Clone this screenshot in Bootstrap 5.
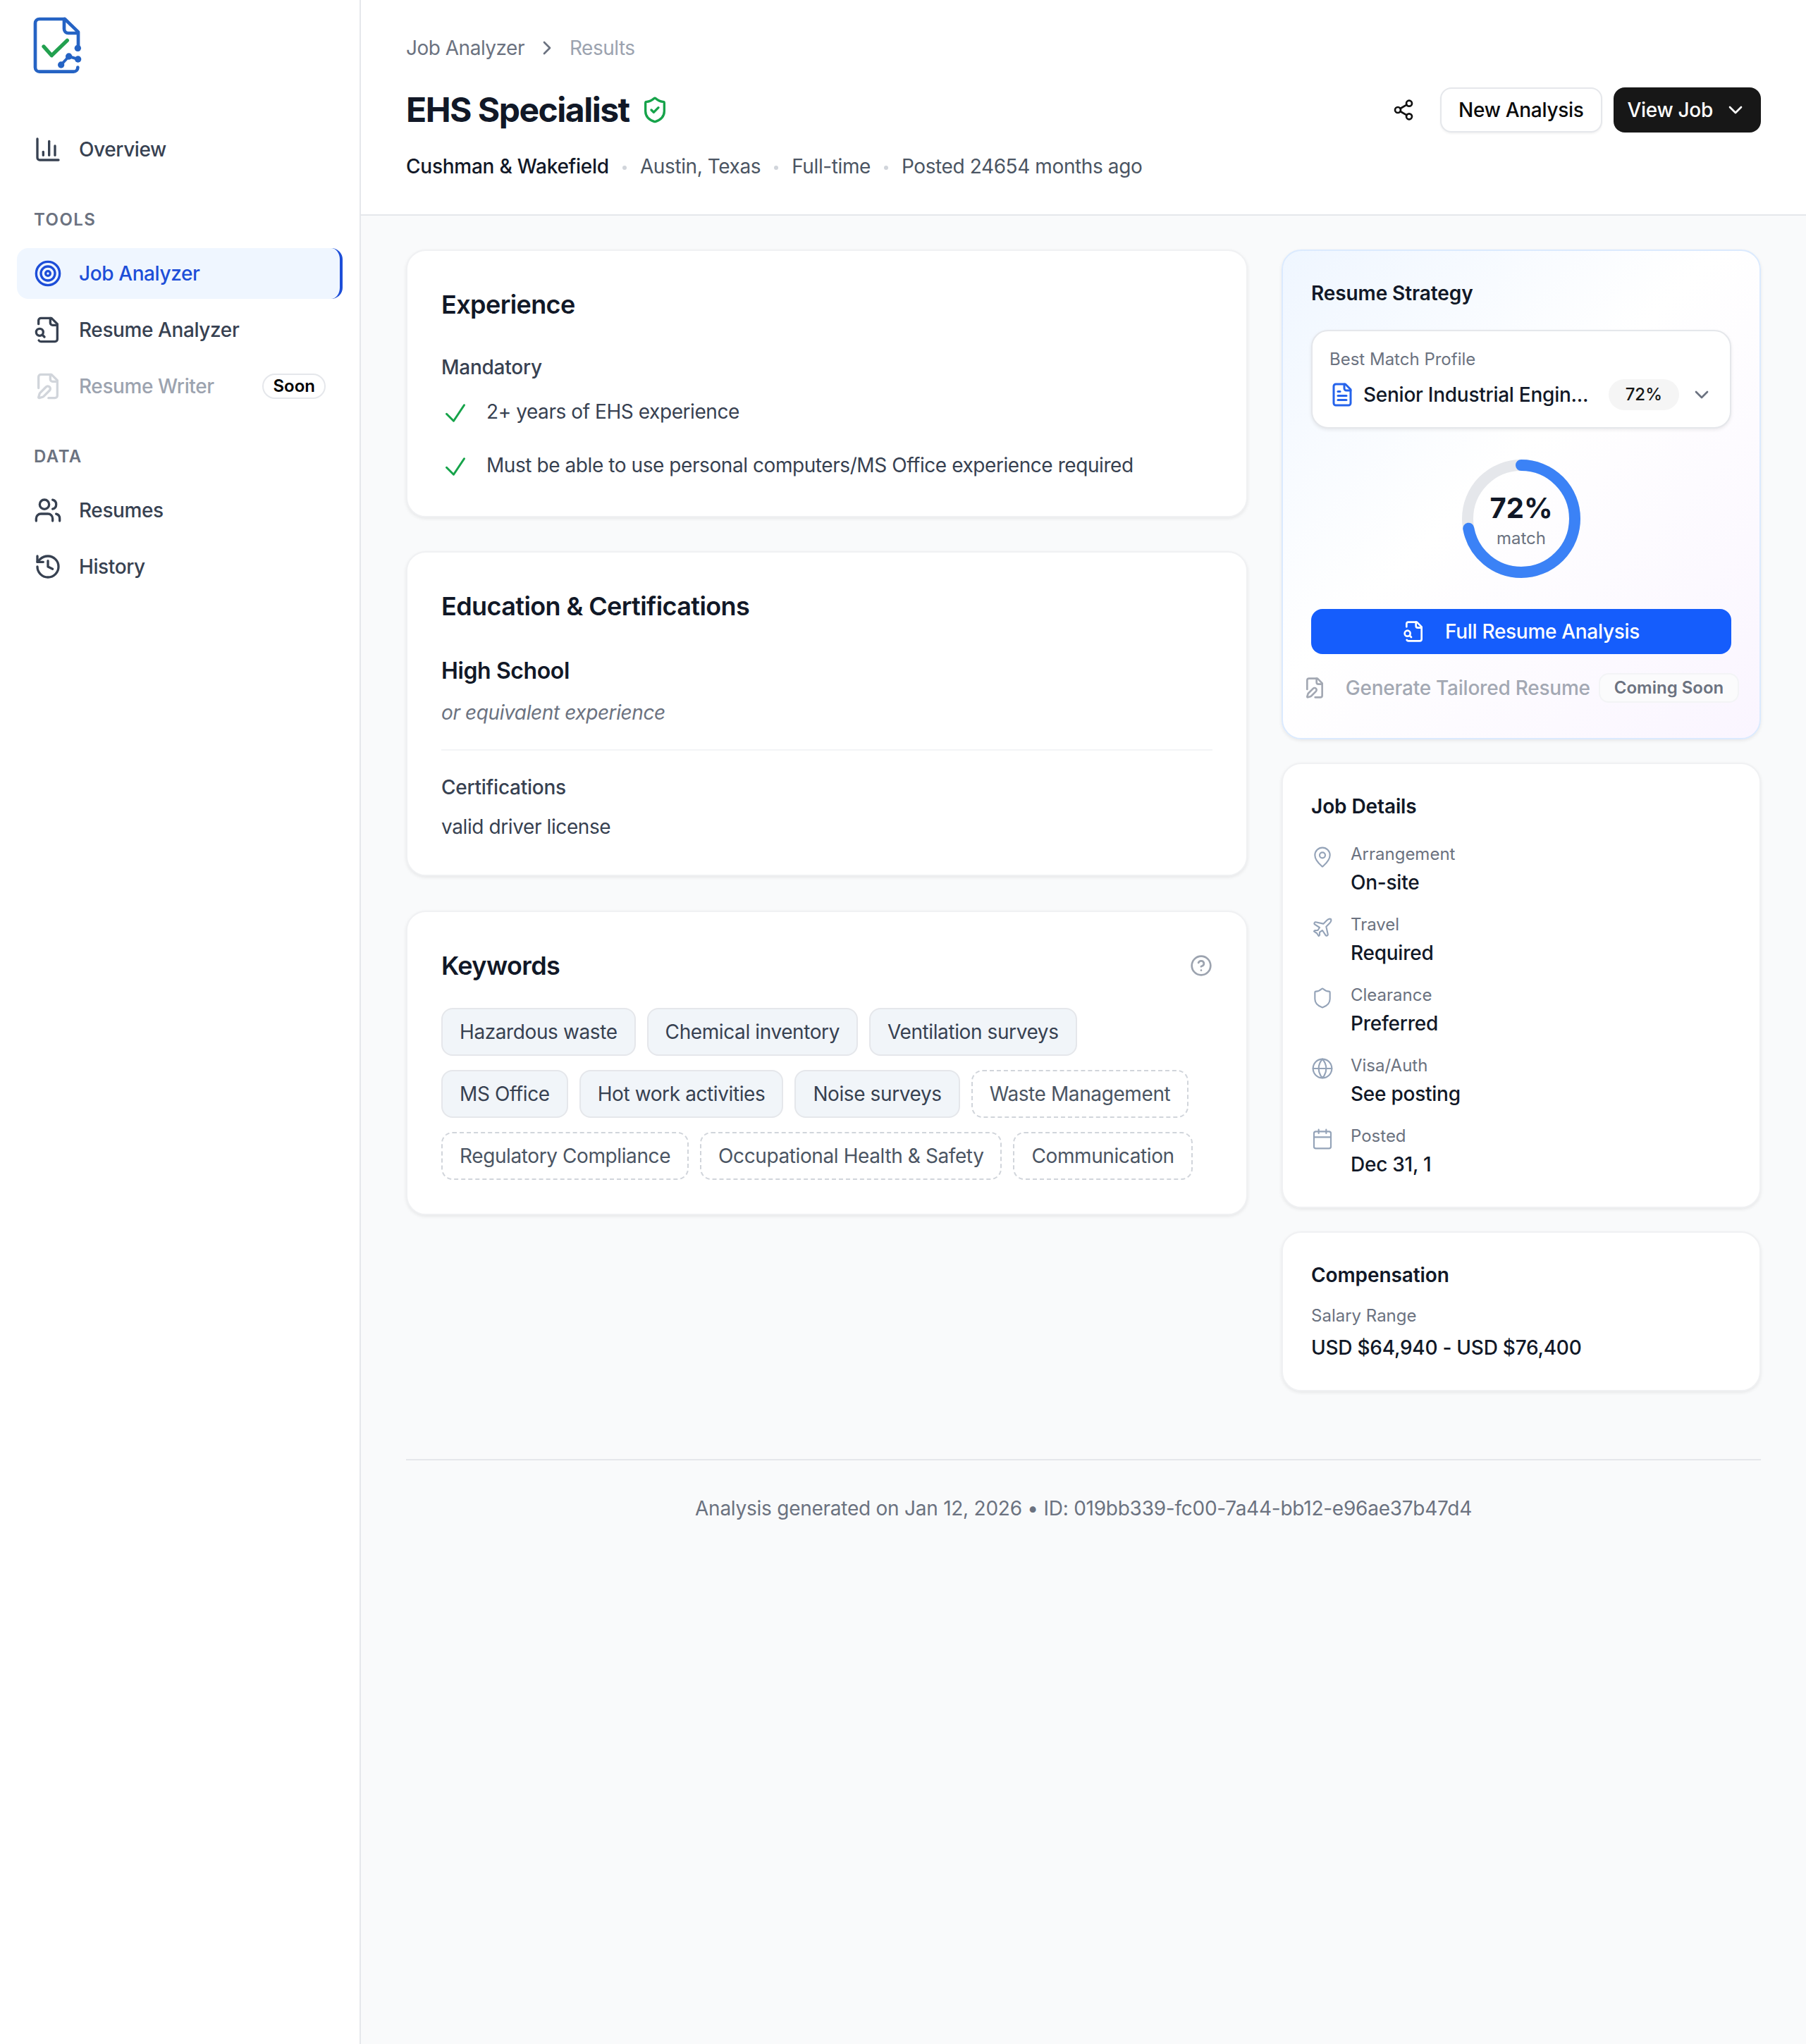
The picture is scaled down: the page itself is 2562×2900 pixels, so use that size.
<!DOCTYPE html>
<html lang="en">
<head>
    <meta charset="UTF-8">
    <meta name="viewport" content="width=device-width, initial-scale=1.0">
    <title>EHS Specialist - Job Analyzer</title>
    <link href="https://cdn.jsdelivr.net/npm/bootstrap@5.3.0/dist/css/bootstrap.min.css" rel="stylesheet">
    <style>
        html { font-size: 32px; }
        body { font-family: Inter, "Liberation Sans", sans-serif; font-size: 28px; line-height: 40px; letter-spacing: -.4px; color: #111827; background: #f9fafb; }
        svg.ico { fill: none; stroke: currentColor; stroke-width: 2; stroke-linecap: round; stroke-linejoin: round; flex-shrink: 0; display: block; }
        .ico-40 { width: 40px; height: 40px; }
        .ico-32 { width: 32px; height: 32px; }

        .side-bar { width: 512px; flex-shrink: 0; background: #fff; border-right: 2px solid #e5e7eb; padding: 24px 24px; }
        .side-logo { display: block; width: 70px; height: 80px; margin: 0 0 72px 22px; }
        .side-label { font-size: 24px; line-height: 32px; font-weight: 600; letter-spacing: .06em; text-transform: uppercase; color: #6b7280; margin: 48px 0 24px 24px; }
        .side-link { display: flex; align-items: center; gap: 24px; height: 72px; padding: 0 24px; border-radius: 16px; font-weight: 500; color: #374151; text-decoration: none; margin-bottom: 8px; }
        .side-link.is-active { background: #eff6ff; color: #1d4ed8; border-right: 4px solid #1d4ed8; }
        .side-link.is-off { color: #9ca3af; }
        .side-link.is-off svg { color: #d1d5db; }
        .soon-tag { margin-left: auto; font-size: 24px; line-height: 32px; font-weight: 600; letter-spacing: 0; color: #000; border: 2px solid #e5e7eb; border-radius: 999px; padding: 0 13px; margin-right: 0; }

        .top-head { background: #fff; border-bottom: 2px solid #e5e7eb; padding: 48px 64px 48px; }
        .crumb-a { color: #6b7280; letter-spacing: -.5px; }
        .crumb-b { color: #9ca3af; letter-spacing: -.5px; }
        .crumb-sep { color: #6b7280; }
        .head-row { height: 64px; margin-top: 36px; }
        .head-title { font-size: 48px; line-height: 64px; font-weight: 700; letter-spacing: -1.5px; margin: 0; color: #111827; }
        .shield-ok { color: #16a34a; }
        .head-meta { margin-top: 28px; color: #4b5563; }
        .head-meta b { font-weight: 500; color: #111827; letter-spacing: -.25px; }
        .meta-dot { width: 6px; height: 6px; border-radius: 50%; background: #d1d5db; margin: 4px 19px 0; }
        .btn-share { width: 72px; height: 64px; padding: 0; display: flex; align-items: center; justify-content: center; border: 0; background: none; color: #111; }
        .btn-new, .btn-view { height: 64px; font-size: 28px; line-height: 40px; font-weight: 500; letter-spacing: -.3px; border-radius: 16px; display: flex; align-items: center; }
        .btn-new { padding: 0 24px; background: #fff; border: 2px solid #e5e7eb; color: #0a0a0a; box-shadow: 0 2px 3px rgba(0,0,0,.05); }
        .btn-view { padding: 0 20px; gap: 16px; background: #171717; border: 0; color: #fff; }

        .main-wrap { padding: 48px 64px 0; }
        .col-right { width: 680px; flex-shrink: 0; }
        .panel-box { background: #fff; border: 2px solid #f0f1f3; border-radius: 28px; box-shadow: 0 2px 5px rgba(0,0,0,.08); }
        .panel-big { padding: 48px; }
        .panel-side { padding: 40px; }
        .big-title { font-size: 36px; line-height: 56px; font-weight: 600; letter-spacing: -.6px; margin: 0; color: #111827; }
        .side-title { font-size: 28px; line-height: 40px; font-weight: 600; letter-spacing: -.1px; margin: 0; color: #111827; }
        .txt-body { color: #374151; }
        .txt-head { color: #374151; font-weight: 500; letter-spacing: -.25px; }
        .txt-gray { color: #6b7280; }
        .txt-small { font-size: 24px; line-height: 32px; letter-spacing: 0; color: #6b7280; }
        .txt-val { font-weight: 500; letter-spacing: -.25px; color: #111827; margin-top: 4px; }
        .need-head { margin-top: 41px; }
        .need-list { list-style: none; margin: 20px 0 0; padding: 0 0 1px; display: flex; flex-direction: column; gap: 30px; }
        .need-list li { display: flex; gap: 24px; line-height: 46px; letter-spacing: -.43px; color: #374151; }
        .need-list svg { color: #16a34a; stroke-width: 1.8; margin-top: 5px; }
        .edu-name { font-size: 32px; line-height: 48px; font-weight: 600; color: #111827; margin-top: 40px; }
        .rule-line { border-top: 2px solid #f3f4f6; margin: 32px 0; }
        .edu-box { margin-top: 48px; }
        .kw-box { margin-top: 49px; }
        .edu-note { margin-top: 15px; }
        .edu-lic { margin-top: 16px; }
        .kw-list { margin-top: 32px; }
        .kw-help { color: #9ca3af; }
        .chip-row { display: flex; gap: 16px; margin-bottom: 20px; }
        .chip-row:last-child { margin-bottom: 0; }
        .kw-chip { height: 68px; display: flex; align-items: center; padding: 0 24px; border-radius: 16px; border: 2px solid #e5e7eb; background: #f1f5f9; color: #374151; white-space: nowrap; }
        .kw-chip.is-dash { background: #fff; border: 2px dashed #d1d5db; color: #4b5563; }

        .panel-strategy { background: linear-gradient(135deg, #eff6ff 0%, #ffffff 45%, #faf5ff 100%); border-color: #dbeafe; padding-bottom: 39px; }
        .pick-box { background: #fff; border: 2px solid #e5e7eb; border-radius: 24px; padding: 24px; margin-top: 32px; box-shadow: 0 2px 5px rgba(0,0,0,.08); }
        .pick-row { margin-top: 12px; gap: 12px; font-weight: 500; letter-spacing: -.26px; color: #111827; }
        .pick-doc { width: 36px; height: 36px; color: #2563eb; }
        .pick-arrow { color: #6b7280; margin-left: 4px; }
        .pick-pct { height: 44px; padding: 0 24px; border-radius: 22px; background: #f5f5f5; font-size: 24px; line-height: 44px; font-weight: 500; letter-spacing: 0; color: #171717; }
        .ring-box { width: 168px; height: 168px; margin: 44px auto; position: relative; }
        .ring-text { position: absolute; inset: 0; padding-top: 4px; display: flex; flex-direction: column; align-items: center; justify-content: center; }
        .ring-num { font-size: 40px; line-height: 48px; font-weight: 700; letter-spacing: 0; color: #111827; }
        .ring-sub { font-size: 24px; line-height: 32px; letter-spacing: 0; color: #6b7280; margin-top: 3px; }
        .btn-blue { height: 64px; width: 100%; display: flex; align-items: center; justify-content: center; gap: 28px; font-size: 28px; line-height: 40px; font-weight: 500; letter-spacing: -.3px; color: #fff; background: #155dfc; border: 0; border-radius: 16px; }
        .gen-row { height: 64px; margin-top: 16px; display: flex; align-items: center; justify-content: center; white-space: nowrap; color: #a3a8b3; font-weight: 500; letter-spacing: -.23px; }
        .gen-row svg { color: #a3a8b3; margin-right: 28px; }
        .gen-tag { margin-left: 12px; font-size: 24px; line-height: 38px; font-weight: 600; letter-spacing: 0; color: #6b7280; background: #fbfbfc; border: 2px solid #f3f4f6; border-radius: 14px; padding: 0 20px; }
        .side-gap { margin-top: 33px; }
        .info-list { display: flex; flex-direction: column; gap: 24px; margin-top: 32px; }
        .info-item { display: flex; gap: 24px; }
        .info-item svg { color: #94a3b8; stroke-width: 1.6; margin-top: 4px; }
        .comp-label { margin-top: 22px; }
        .comp-val { margin-top: 9px; }
        .foot-line { margin-top: 96px; border-top: 2px solid #e5e7eb; padding-top: 48px; text-align: center; letter-spacing: -.25px; color: #6b7280; }
    </style>
</head>
<body>
    <div class="d-flex min-vh-100">
        <aside class="side-bar">
            <svg class="side-logo" viewBox="80 70 210 240" fill="none" stroke-linecap="round" stroke-linejoin="round">
                <path d="M215 79H110a18 18 0 0 0-18 18V285a18 18 0 0 0 18 18H255a18 18 0 0 0 18-18" stroke="#2563c4" stroke-width="14"/>
                <path d="M215 79v42a18 18 0 0 0 18 18h42M218 79l57 55v66" stroke="#2563c4" stroke-width="14"/>
                <circle cx="273" cy="203" r="14" fill="#2563c4"/>
                <circle cx="202" cy="274" r="14" fill="#2563c4"/>
                <circle cx="235" cy="238" r="14" fill="#2563c4"/>
                <circle cx="274" cy="250" r="14" fill="#2563c4"/>
                <path d="M202 274l33-36 39 12" stroke="#2563c4" stroke-width="12"/>
                <path d="M128 196l34 38 66-64" stroke="#22a04f" stroke-width="16"/>
            </svg>
            <a class="side-link" href="#">
                <svg class="ico ico-40" viewBox="0 0 24 24"><path d="M3 3v16a2 2 0 0 0 2 2h16"/><path d="M18 17V9"/><path d="M13 17V5"/><path d="M8 17v-3"/></svg>
                Overview
            </a>
            <div class="side-label">Tools</div>
            <a class="side-link is-active" href="#">
                <svg class="ico ico-40" viewBox="0 0 24 24"><circle cx="12" cy="12" r="10"/><circle cx="12" cy="12" r="6"/><circle cx="12" cy="12" r="2"/></svg>
                Job Analyzer
            </a>
            <a class="side-link" href="#">
                <svg class="ico ico-40" viewBox="0 0 24 24"><path d="M14 2v4a2 2 0 0 0 2 2h4"/><path d="M4.268 21a2 2 0 0 0 1.727 1H18a2 2 0 0 0 2-2V7l-5-5H6a2 2 0 0 0-2 2v3"/><path d="m9 18-1.5-1.5"/><circle cx="5" cy="14" r="3"/></svg>
                Resume Analyzer
            </a>
            <a class="side-link is-off" href="#">
                <svg class="ico ico-40" viewBox="0 0 24 24"><path d="M12.5 22H18a2 2 0 0 0 2-2V7l-5-5H6a2 2 0 0 0-2 2v9.5"/><path d="M14 2v4a2 2 0 0 0 2 2h4"/><path d="M13.378 15.626a1 1 0 1 0-3.004-3.004l-5.01 5.012a2 2 0 0 0-.506.854l-.837 2.87a.5.5 0 0 0 .62.62l2.87-.837a2 2 0 0 0 .854-.506z"/></svg>
                Resume Writer
                <span class="soon-tag">Soon</span>
            </a>
            <div class="side-label">Data</div>
            <a class="side-link" href="#">
                <svg class="ico ico-40" viewBox="0 0 24 24"><path d="M16 21v-2a4 4 0 0 0-4-4H6a4 4 0 0 0-4 4v2"/><circle cx="9" cy="7" r="4"/><path d="M22 21v-2a4 4 0 0 0-3-3.87"/><path d="M16 3.13a4 4 0 0 1 0 7.75"/></svg>
                Resumes
            </a>
            <a class="side-link" href="#">
                <svg class="ico ico-40" viewBox="0 0 24 24"><path d="M3 12a9 9 0 1 0 9-9 9.75 9.75 0 0 0-6.74 2.74L3 8"/><path d="M3 3v5h5"/><path d="M12 7v5l4 2"/></svg>
                History
            </a>
        </aside>

        <div class="flex-grow-1">
            <header class="top-head">
                <div class="d-flex align-items-center gap-2">
                    <span class="crumb-a">Job Analyzer</span>
                    <svg class="ico ico-32 crumb-sep" viewBox="0 0 24 24"><path d="m9 18 6-6-6-6"/></svg>
                    <span class="crumb-b">Results</span>
                </div>
                <div class="head-row d-flex align-items-center">
                    <h1 class="head-title">EHS Specialist</h1>
                    <svg class="ico ico-40 ms-2 shield-ok" viewBox="0 0 24 24"><path d="M20 13c0 5-3.5 7.5-7.66 8.95a1 1 0 0 1-.67-.01C7.5 20.5 4 18 4 13V6a1 1 0 0 1 1-1c2 0 4.5-1.2 6.24-2.72a1.17 1.17 0 0 1 1.52 0C14.51 3.81 17 5 19 5a1 1 0 0 1 1 1z"/><path d="m9 12 2 2 4-4"/></svg>
                    <div class="ms-auto d-flex align-items-center gap-2">
                        <button type="button" class="btn-share">
                            <svg class="ico ico-32" viewBox="0 0 24 24"><circle cx="18" cy="5" r="3"/><circle cx="6" cy="12" r="3"/><circle cx="18" cy="19" r="3"/><path d="m8.59 13.51 6.83 3.98"/><path d="m15.41 6.51-6.82 3.98"/></svg>
                        </button>
                        <button type="button" class="btn btn-new">New Analysis</button>
                        <button type="button" class="btn btn-view">View Job
                            <svg class="ico ico-32" viewBox="0 0 24 24"><path d="m6 9 6 6 6-6"/></svg>
                        </button>
                    </div>
                </div>
                <div class="head-meta d-flex align-items-center">
                    <b>Cushman &amp; Wakefield</b><span class="meta-dot"></span>
                    <span>Austin, Texas</span><span class="meta-dot"></span>
                    <span>Full-time</span><span class="meta-dot"></span>
                    <span>Posted 24654 months ago</span>
                </div>
            </header>

            <main class="main-wrap">
                <div class="d-flex gap-4 align-items-start">
                    <div class="flex-grow-1">
                        <section class="panel-box panel-big">
                            <h2 class="big-title">Experience</h2>
                            <div class="txt-head need-head">Mandatory</div>
                            <ul class="need-list">
                                <li><svg class="ico ico-40" viewBox="0 0 24 24"><path d="m4.5 12.75 6 6 9-13.5"/></svg>2+ years of EHS experience</li>
                                <li><svg class="ico ico-40" viewBox="0 0 24 24"><path d="m4.5 12.75 6 6 9-13.5"/></svg>Must be able to use personal computers/MS Office experience required</li>
                            </ul>
                        </section>

                        <section class="panel-box panel-big edu-box">
                            <h2 class="big-title">Education &amp; Certifications</h2>
                            <div class="edu-name">High School</div>
                            <div class="txt-gray fst-italic edu-note">or equivalent experience</div>
                            <div class="rule-line"></div>
                            <div class="txt-head">Certifications</div>
                            <div class="txt-body edu-lic">valid driver license</div>
                        </section>

                        <section class="panel-box panel-big kw-box">
                            <div class="d-flex align-items-center justify-content-between">
                                <h2 class="big-title">Keywords</h2>
                                <svg class="ico ico-32 kw-help" viewBox="0 0 24 24"><circle cx="12" cy="12" r="10"/><path d="M9.09 9a3 3 0 0 1 5.83 1c0 2-3 3-3 3"/><path d="M12 17h.01"/></svg>
                            </div>
                            <div class="kw-list">
                                <div class="chip-row">
                                    <span class="kw-chip">Hazardous waste</span>
                                    <span class="kw-chip">Chemical inventory</span>
                                    <span class="kw-chip">Ventilation surveys</span>
                                </div>
                                <div class="chip-row">
                                    <span class="kw-chip">MS Office</span>
                                    <span class="kw-chip">Hot work activities</span>
                                    <span class="kw-chip">Noise surveys</span>
                                    <span class="kw-chip is-dash">Waste Management</span>
                                </div>
                                <div class="chip-row">
                                    <span class="kw-chip is-dash">Regulatory Compliance</span>
                                    <span class="kw-chip is-dash">Occupational Health &amp; Safety</span>
                                    <span class="kw-chip is-dash">Communication</span>
                                </div>
                            </div>
                        </section>
                    </div>

                    <div class="col-right">
                        <section class="panel-box panel-side panel-strategy">
                            <h3 class="side-title">Resume Strategy</h3>
                            <div class="pick-box">
                                <div class="txt-small">Best Match Profile</div>
                                <div class="pick-row d-flex align-items-center">
                                    <svg class="ico pick-doc" viewBox="0 0 24 24"><path d="M15 2H6a2 2 0 0 0-2 2v16a2 2 0 0 0 2 2h12a2 2 0 0 0 2-2V7Z"/><path d="M14 2v4a2 2 0 0 0 2 2h4"/><path d="M10 9H8"/><path d="M16 13H8"/><path d="M16 17H8"/></svg>
                                    <span class="flex-grow-1 text-nowrap">Senior Industrial Engin...</span>
                                    <span class="pick-pct">72%</span>
                                    <svg class="ico ico-32 pick-arrow" viewBox="0 0 24 24"><path d="m6 9 6 6 6-6"/></svg>
                                </div>
                            </div>
                            <div class="ring-box">
                                <svg width="168" height="168" viewBox="0 0 168 168" fill="none">
                                    <circle cx="84" cy="84" r="76" stroke="#e5e7eb" stroke-width="16"/>
                                    <circle cx="84" cy="84" r="76" stroke="#3b82f6" stroke-width="16" stroke-linecap="round" stroke-dasharray="343.8 477.5" transform="rotate(-90 84 84)"/>
                                </svg>
                                <div class="ring-text">
                                    <span class="ring-num">72%</span>
                                    <span class="ring-sub">match</span>
                                </div>
                            </div>
                            <button type="button" class="btn-blue">
                                <svg class="ico ico-32" viewBox="0 0 24 24"><path d="M14 2v4a2 2 0 0 0 2 2h4"/><path d="M4.268 21a2 2 0 0 0 1.727 1H18a2 2 0 0 0 2-2V7l-5-5H6a2 2 0 0 0-2 2v3"/><path d="m9 18-1.5-1.5"/><circle cx="5" cy="14" r="3"/></svg>
                                Full Resume Analysis
                            </button>
                            <div class="gen-row">
                                <svg class="ico ico-32" viewBox="0 0 24 24"><path d="M12.5 22H18a2 2 0 0 0 2-2V7l-5-5H6a2 2 0 0 0-2 2v9.5"/><path d="M14 2v4a2 2 0 0 0 2 2h4"/><path d="M13.378 15.626a1 1 0 1 0-3.004-3.004l-5.01 5.012a2 2 0 0 0-.506.854l-.837 2.87a.5.5 0 0 0 .62.62l2.87-.837a2 2 0 0 0 .854-.506z"/></svg>
                                <span>Generate Tailored Resume</span>
                                <span class="gen-tag">Coming Soon</span>
                            </div>
                        </section>

                        <section class="panel-box panel-side side-gap">
                            <h3 class="side-title">Job Details</h3>
                            <div class="info-list">
                                <div class="info-item">
                                    <svg class="ico ico-32" viewBox="0 0 24 24"><path d="M20 10c0 4.993-5.539 10.193-7.399 11.799a1 1 0 0 1-1.202 0C9.539 20.193 4 14.993 4 10a8 8 0 0 1 16 0"/><circle cx="12" cy="10" r="3"/></svg>
                                    <div><div class="txt-small">Arrangement</div><div class="txt-val">On-site</div></div>
                                </div>
                                <div class="info-item">
                                    <svg class="ico ico-32" viewBox="0 0 24 24"><path d="M17.8 19.2 16 11l3.5-3.5C21 6 21.5 4 21 3c-1-.5-3 0-4.5 1.5L13 8 4.8 6.2c-.5-.1-.9.1-1.1.5l-.3.5c-.2.5-.1 1 .3 1.3L9 12l-2 3H4l-1 1 3 2 2 3 1-1v-3l3-2 3.5 5.3c.3.4.8.5 1.3.3l.5-.2c.4-.3.6-.7.5-1.2z"/></svg>
                                    <div><div class="txt-small">Travel</div><div class="txt-val">Required</div></div>
                                </div>
                                <div class="info-item">
                                    <svg class="ico ico-32" viewBox="0 0 24 24"><path d="M20 13c0 5-3.5 7.5-7.66 8.95a1 1 0 0 1-.67-.01C7.5 20.5 4 18 4 13V6a1 1 0 0 1 1-1c2 0 4.5-1.2 6.24-2.72a1.17 1.17 0 0 1 1.52 0C14.51 3.81 17 5 19 5a1 1 0 0 1 1 1z"/></svg>
                                    <div><div class="txt-small">Clearance</div><div class="txt-val">Preferred</div></div>
                                </div>
                                <div class="info-item">
                                    <svg class="ico ico-32" viewBox="0 0 24 24"><circle cx="12" cy="12" r="10"/><path d="M12 2a14.5 14.5 0 0 0 0 20 14.5 14.5 0 0 0 0-20"/><path d="M2 12h20"/></svg>
                                    <div><div class="txt-small">Visa/Auth</div><div class="txt-val">See posting</div></div>
                                </div>
                                <div class="info-item">
                                    <svg class="ico ico-32" viewBox="0 0 24 24"><path d="M8 2v4"/><path d="M16 2v4"/><rect width="18" height="18" x="3" y="4" rx="2"/><path d="M3 10h18"/></svg>
                                    <div><div class="txt-small">Posted</div><div class="txt-val">Dec 31, 1</div></div>
                                </div>
                            </div>
                        </section>

                        <section class="panel-box panel-side side-gap">
                            <h3 class="side-title">Compensation</h3>
                            <div class="txt-small comp-label">Salary Range</div>
                            <div class="txt-val comp-val">USD $64,940 - USD $76,400</div>
                        </section>
                    </div>
                </div>

                <footer class="foot-line">Analysis generated on Jan 12, 2026 &bull; ID: 019bb339-fc00-7a44-bb12-e96ae37b47d4</footer>
            </main>
        </div>
    </div>
    <script src="https://cdn.jsdelivr.net/npm/bootstrap@5.3.0/dist/js/bootstrap.bundle.min.js"></script>
</body>
</html>
